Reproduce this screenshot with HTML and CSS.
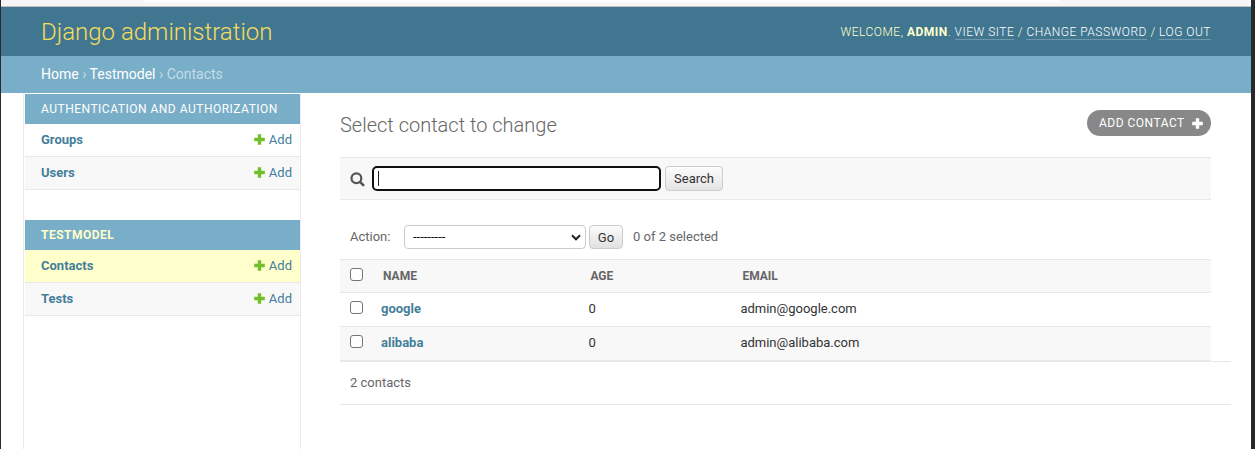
FILE: index.html
```html
<!DOCTYPE html>
<html lang="en">
<head>
<meta charset="utf-8">
<title>Select contact to change | Django site admin</title>
<link rel="stylesheet" href="styles.css">
</head>
<body>
<svg class="sprite" aria-hidden="true">
  <symbol id="plus" viewBox="0 0 11 11"><path d="M3.8 0.2h3.4v3.6h3.6v3.4H7.2v3.6H3.8V7.2H0.2V3.8h3.6z"/></symbol>
</svg>
<div class="window">
  <div class="browser-edge"><div class="address-bar"></div></div>
  <header class="header">
    <h1 class="site-name">Django administration</h1>
    <div class="user-tools">Welcome, <strong>admin</strong>. <a>View site</a> / <a>Change password</a> / <a>Log out</a></div>
  </header>
  <nav class="breadcrumbs"><a>Home</a> › <a>Testmodel</a> › Contacts</nav>
  <div class="main">
    <aside class="sidebar">
      <section class="module">
        <h2 class="caption">Authentication and Authorization</h2>
        <div class="model"><b>Groups</b><a class="add"><svg class="plus"><use href="#plus"/></svg>Add</a></div>
        <div class="model alt"><b>Users</b><a class="add"><svg class="plus"><use href="#plus"/></svg>Add</a></div>
      </section>
      <section class="module">
        <h2 class="caption current-app">Testmodel</h2>
        <div class="model current"><b>Contacts</b><a class="add"><svg class="plus"><use href="#plus"/></svg>Add</a></div>
        <div class="model alt"><b>Tests</b><a class="add"><svg class="plus"><use href="#plus"/></svg>Add</a></div>
      </section>
    </aside>
    <main class="content">
      <div class="title-row">
        <h1 class="title">Select contact to change</h1>
        <a class="add-contact">Add contact<svg class="plus"><use href="#plus"/></svg></a>
      </div>
      <form class="search-bar">
        <svg class="search-icon" viewBox="0 0 15 15"><circle cx="6.4" cy="6.2" r="4.9" fill="none" stroke="#555" stroke-width="2.2"/><path d="M10 9.8l4 4" stroke="#555" stroke-width="2.6"/></svg>
        <div class="search-input"><span class="caret"></span></div>
        <button type="button" class="button search-button">Search</button>
      </form>
      <div class="actions">
        <span class="action-label">Action:</span>
        <div class="select"><span>---------</span><svg class="chevron" viewBox="0 0 10 7"><path d="M1 1.3l4 4 4-4" fill="none" stroke="#222" stroke-width="2"/></svg></div>
        <button type="button" class="button go-button">Go</button>
        <span class="counter">0 of 2 selected</span>
      </div>
      <div class="results">
        <div class="row head"><i class="box"></i><span>Name</span><span>Age</span><span>Email</span></div>
        <div class="row"><i class="box"></i><b>google</b><span>0</span><span>admin@google.com</span></div>
        <div class="row alt"><i class="box"></i><b>alibaba</b><span>0</span><span>admin@alibaba.com</span></div>
      </div>
      <p class="paginator">2 contacts</p>
    </main>
  </div>
</div>
</body>
</html>
```
FILE: styles.css
```css
* { box-sizing: border-box; }
body {
  margin: 0;
  height: 449px;
  overflow: hidden;
  background: #fff;
  color: #333;
  font: 13px/16px Roboto, "Liberation Sans", sans-serif;
}
h1, h2, p { margin: 0; font-weight: 400; }
.sprite { display: none; }
.window {
  display: flex;
  flex-direction: column;
  height: 449px;
  border-left: 1px solid #2a2b2d;
  border-right: 4px solid #272829;
}
.browser-edge { flex: none; height: 7px; background: #f6f6f6; border-bottom: 1px solid #bfbfbf; }
.address-bar { width: 916px; height: 2px; margin-left: 143px; background: #fff; border-radius: 0 0 4px 4px; }

.header {
  flex: none;
  display: flex;
  justify-content: space-between;
  height: 49px;
  padding: 0 40px;
  background: #417690;
  color: #ffc;
}
.site-name { padding-top: 10px; font-size: 24px; line-height: 30px; font-weight: 300; color: #f5dd5d; }
.user-tools { padding-top: 18px; font-size: 12px; line-height: 15px; letter-spacing: .5px; font-weight: 300; text-transform: uppercase; }
.user-tools strong { font-weight: 700; }
.user-tools a { color: #fff; border-bottom: 1px solid rgba(255, 255, 255, .25); }
.breadcrumbs {
  flex: none;
  height: 37px;
  padding: 10px 40px;
  background: #79aec8;
  color: #c4dce8;
  font-size: 14px;
  line-height: 17px;
}
.breadcrumbs a { color: #fff; }

.main { flex: 1; display: flex; min-height: 0; }
.sidebar {
  flex: none;
  width: 278px;
  margin-left: 22px;
  padding: 1px 0 0 1px;
  border: solid #eaeaea;
  border-width: 0 1px;
}
.module { margin-bottom: 30px; }
.caption { height: 30px; padding: 7px 16px; background: #79aec8; color: #fff; font-size: 12px; line-height: 16px; letter-spacing: .5px; text-transform: uppercase; }
.current-app { color: #ffc; font-weight: 700; }
.model {
  display: flex;
  justify-content: space-between;
  height: 33px;
  padding: 8px 8px 0 16px;
  border-bottom: 1px solid #e8e8e8;
  color: #447e9b;
}
.alt { background: #f8f8f8; }
.current { background: #ffc; }
.add { display: flex; }
.plus { width: 11px; height: 11px; fill: #70bf2b; }
.add .plus { margin: 2px 4px 0 0; }

.content { flex: 1; margin-left: 39px; padding: 17px 20px 0 0; }
.title-row { display: flex; justify-content: space-between; height: 47px; margin-right: 20px; }
.title { padding-top: 3px; font-size: 20px; line-height: 24px; font-weight: 300; color: #666; }
.add-contact {
  display: flex;
  justify-content: space-between;
  width: 124px;
  height: 26px;
  padding: 5px 8px 0 12px;
  border-radius: 13px;
  background: #888;
  color: #fff;
  font-size: 12px;
  letter-spacing: .5px;
  text-transform: uppercase;
}
.add-contact .plus { margin-top: 3px; fill: #fff; }

.search-bar {
  display: flex;
  height: 43px;
  margin-right: 20px;
  padding: 8px 10px;
  background: #f8f8f8;
  border: solid #e8e8e8;
  border-width: 1px 0;
}
.search-icon { width: 15px; height: 15px; margin: 6px 7px 0 0; }
.search-input { width: 289px; height: 25px; padding: 3px 4px; border: 2px solid #101010; border-radius: 5px; background: #fff; }
.caret { display: block; width: 1px; height: 15px; background: #222; }
.button {
  height: 25px;
  padding: 0;
  border: 1px solid #ccc;
  border-radius: 4px;
  background: linear-gradient(#fff, #ddd);
  color: #333;
  font: 13px/23px Roboto, sans-serif;
}
.search-button { width: 58px; margin-left: 4px; background: linear-gradient(#fcfcfc, #e4e4e4); }
.actions { display: flex; height: 59px; padding: 25px 10px 0; color: #666; }
.action-label { width: 54px; padding-top: 4px; }
.select {
  display: flex;
  justify-content: space-between;
  width: 182px;
  height: 24px;
  padding: 3px 4px 0 8px;
  border: 1px solid #ccc;
  border-radius: 4px;
  background: #fff;
  color: #111;
}
.chevron { width: 10px; height: 7px; margin-top: 5px; }
.go-button { width: 34px; height: 24px; margin-left: 3px; background: linear-gradient(#fcfcfc, #e0e0e0); }
.counter { margin-left: 10px; padding-top: 4px; }

.results { margin-right: 20px; border-top: 1px solid #e8e8e8; }
.row {
  display: grid;
  grid-template-columns: 31px 207.4px 152px 1fr;
  height: 34px;
  padding: 8px 10px 0;
  border-bottom: 1px solid #e8e8e8;
}
.row b { color: #447e9b; }
.box { width: 13px; height: 13px; border: 1px solid #767676; border-radius: 3px; background: #fff; }
.head { height: 33px; background: #f8f8f8; color: #666; font-size: 12px; font-weight: 700; text-transform: uppercase; }
.head span { padding-left: 2px; }
.paginator { height: 44px; padding: 13px 10px; border: solid #e8e8e8; border-width: 1px 0; color: #666; }
```
